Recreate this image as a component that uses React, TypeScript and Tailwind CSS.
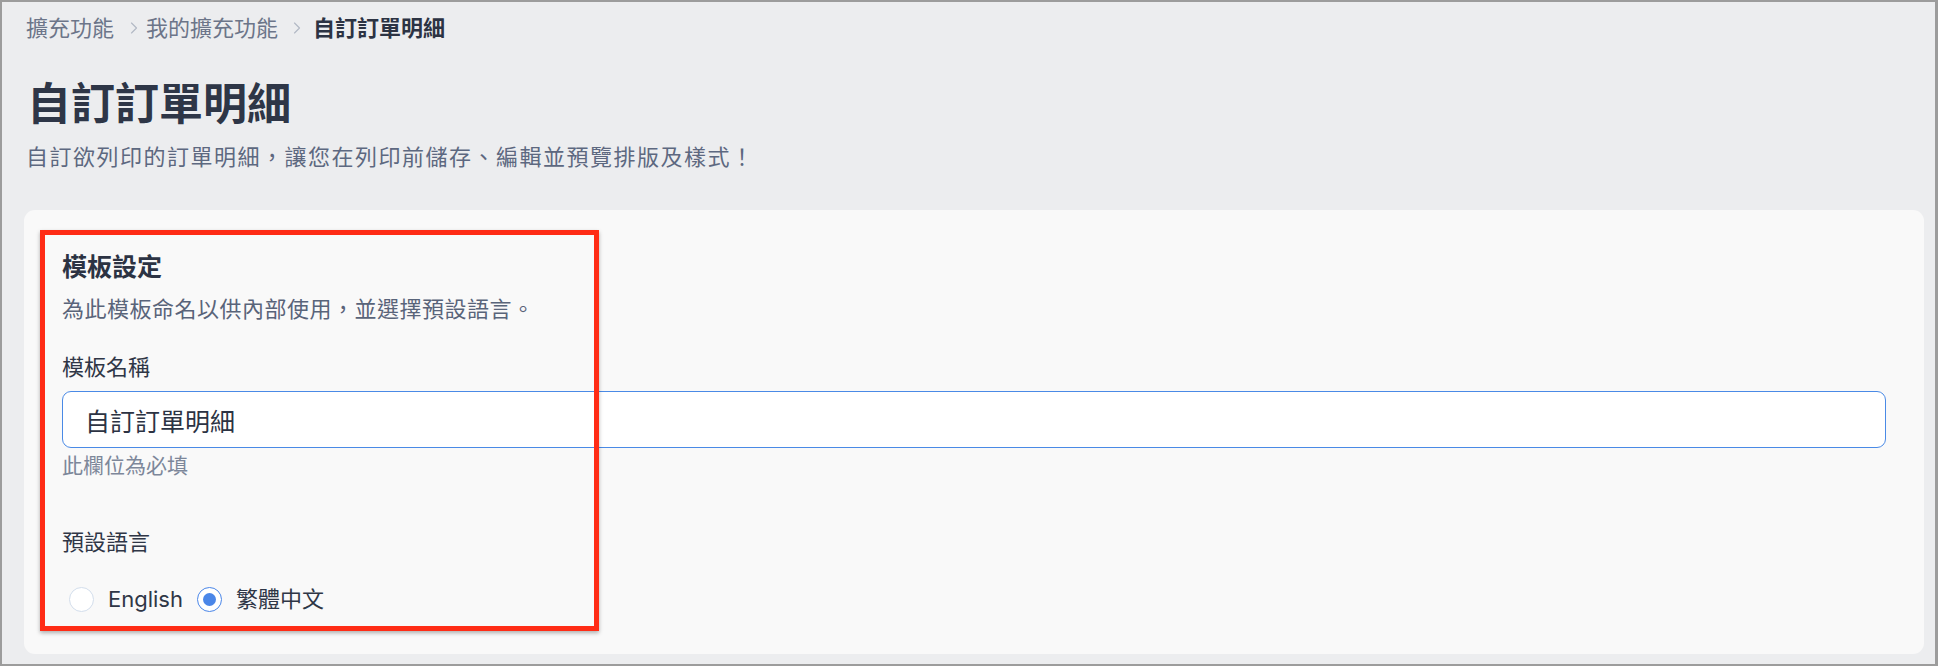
import { ChevronRight } from 'lucide-react';

const font = { fontFamily: 'Inter, "Noto Sans CJK TC", sans-serif' };

function Radio({ checked, label }: { checked?: boolean; label: string }) {
  return (
    <label className="flex items-center gap-[14px]">
      <span
        className={
          checked
            ? 'w-[25px] h-[25px] rounded-full border border-[#4a86e8] bg-white flex items-center justify-center'
            : 'w-[25px] h-[25px] rounded-full border border-[#d3deec] bg-white'
        }
      >
        {checked && <span className="w-[13px] h-[13px] rounded-full bg-[#4a86e8]" />}
      </span>
      <span className="text-[22px] leading-[26px] text-[#2f3646]">{label}</span>
    </label>
  );
}

export default function App() {
  return (
    <div
      className="w-[1938px] h-[666px] bg-[#ecedef] border-t-2 border-l-2 border-b-2 border-r-[3px] border-[#9c9c9c] pl-[22px] pr-[11px] pt-[12px]"
      style={font}
    >
      <div className="pl-[2px]">
        <nav className="flex items-center h-[28px] text-[22px] leading-[28px]">
          <span className="text-[#6c7589]">擴充功能</span>
          <ChevronRight size={20} strokeWidth={1.4} className="ml-[10px] mr-[2px] text-[#b3b9c4]" />
          <span className="text-[#6c7589]">我的擴充功能</span>
          <ChevronRight size={20} strokeWidth={1.4} className="ml-[9px] mr-[6px] text-[#b3b9c4]" />
          <span className="font-bold text-[#2c3343]">自訂訂單明細</span>
        </nav>
        <h1 className="mt-[34px] text-[44px] leading-[56px] font-bold text-[#2e3647] pl-[1px]">
          自訂訂單明細
        </h1>
        <p className="mt-[11px] text-[22px] leading-[28px] text-[#5d6880] tracking-[1.5px]">
          自訂欲列印的訂單明細，讓您在列印前儲存、編輯並預覽排版及樣式！
        </p>
      </div>

      <section className="relative mt-[39px] bg-[#f9f9f9] rounded-[11px] px-[38px] pt-[43px] pb-[42px]">
        <h2 className="text-[25px] leading-[28px] font-bold text-[#2c3343]">模板設定</h2>
        <p className="mt-[15px] text-[22px] leading-[26px] text-[#59647a] tracking-[0.5px]">
          為此模板命名以供內部使用，並選擇預設語言。
        </p>

        <div className="mt-[32px] text-[22px] leading-[26px] text-[#2f3646]">模板名稱</div>
        <input
          className="mt-[11px] block w-full h-[57px] bg-white border border-[#4a8ae6] rounded-[9px] pl-[22px] text-[25px] text-[#2c3343] outline-none"
          defaultValue="自訂訂單明細"
        />
        <div className="mt-[6px] text-[21px] leading-[24px] text-[#7d879a]">此欄位為必填</div>

        <div className="mt-[51px] text-[22px] leading-[26px] text-[#2f3646]">預設語言</div>
        <div className="mt-[31px] flex items-center gap-[14px] pl-[7px]">
          <Radio label="English" />
          <Radio checked label="繁體中文" />
        </div>

        <div className="absolute left-[16px] top-[20px] w-[559px] h-[401px] border-[5px] border-[#ff2c16] shadow-[0_2px_4px_rgba(0,0,0,0.3)] pointer-events-none" />
      </section>
    </div>
  );
}
